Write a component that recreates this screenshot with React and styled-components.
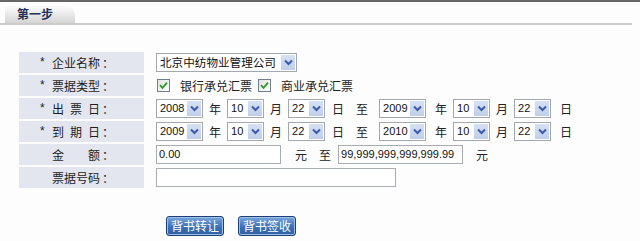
import React from "react";
import styled, { createGlobalStyle } from "styled-components";

const Global = createGlobalStyle`
  html, body { margin: 0; padding: 0; background: #fdfdfd; }
  body { font-family: "Noto Sans CJK SC", "Liberation Sans", sans-serif; font-size: 12px; color: #222; }
`;

const Page = styled.div`
  width: 640px;
  height: 241px;
  overflow: hidden;
`;

const TopBar = styled.div`
  height: 2px;
  background: #676767;
`;

const TabStrip = styled.div`
  height: 20px;
  margin-right: 8px;
  padding-top: 1px;
  padding-left: 5px;
  border-bottom: 2px solid #cbcbcb;
  display: flex;
  align-items: flex-end;
`;

const Tab = styled.div`
  width: 58px;
  height: 19px;
  padding-left: 12px;
  background: linear-gradient(#ffffff, #f0f0f0 40%, #d4d4d4);
  border-top-right-radius: 12px;
  font-weight: bold;
  font-size: 12px;
  line-height: 19px;
  color: #22305a;
`;

const Form = styled.div`
  margin-top: 27px;
  padding-left: 19px;
  display: flex;
  flex-direction: column;
  gap: 2px;
`;

const Row = styled.div`
  display: grid;
  grid-template-columns: 125px 1fr;
  column-gap: 12px;
  height: 21px;
`;

const Label = styled.div`
  background: #e3e6ee;
  display: flex;
  align-items: center;
  padding-left: 21px;
  line-height: 21px;
  color: #1e1e1e;
`;

const Star = styled.span`
  width: 12px;
  font-family: "Liberation Sans", sans-serif;
  font-size: 12px;
`;

const Justified = styled.span`
  display: inline-block;
  width: 48px;
  text-align: justify;
  text-align-last: justify;
`;

const Colon = styled.span`
  margin-left: 2px;
`;

const Value = styled.div`
  display: flex;
  align-items: center;
`;

const SelectBox = styled.span`
  display: inline-flex;
  align-items: stretch;
  box-sizing: border-box;
  width: ${(p) => p.$w}px;
  height: 19px;
  border: 1px solid #a2a7b0;
  background: #fff;
  padding: 1px;
`;

const SelectText = styled.span`
  flex: 1;
  padding-left: 2px;
  line-height: 15px;
  font-family: ${(p) =>
    p.$num ? '"Liberation Sans", sans-serif' : '"Noto Sans CJK SC", sans-serif'};
  font-size: ${(p) => (p.$num ? "11px" : "11.6px")};
  color: #111;
  white-space: nowrap;
  overflow: hidden;
`;

const ArrowBtn = styled.span`
  width: 14px;
  background: linear-gradient(#d6e1f3, #bfcee9);
  display: flex;
  align-items: center;
  justify-content: center;
`;

const Unit = styled.span`
  margin: 0 ${(p) => p.$mr ?? 6}px 0 ${(p) => p.$ml ?? 6}px;
  line-height: 19px;
`;

const TextInput = styled.span`
  display: inline-block;
  box-sizing: border-box;
  width: ${(p) => p.$w}px;
  height: 19px;
  border: 1px solid #a8acb3;
  background: #fff;
  padding-left: 2px;
  font-family: "Liberation Sans", sans-serif;
  font-size: 11px;
  line-height: 17px;
  color: #111;
  white-space: nowrap;
  overflow: hidden;
`;

const CheckBox = styled.span`
  box-sizing: border-box;
  width: 13px;
  height: 13px;
  border: 1px solid #6f7f8f;
  background: linear-gradient(135deg, #e2e2dc, #ffffff);
  display: inline-flex;
  align-items: center;
  justify-content: center;
  margin-left: ${(p) => p.$ml ?? 0}px;
  margin-right: 10px;
`;

const CheckText = styled.span`
  line-height: 19px;
`;

const Buttons = styled.div`
  margin-top: 28px;
  padding-left: 166px;
  display: flex;
  gap: 14px;
`;

const Button = styled.span`
  box-sizing: border-box;
  width: 58px;
  height: 20px;
  border: 1px solid #1d3f75;
  border-radius: 3px;
  background: linear-gradient(#7aa6dc, #3d72b8 55%, #2d5d9e);
  box-shadow: inset 0 0 0 1px #9cc0ea;
  color: #fff;
  font-size: 12px;
  line-height: 18px;
  text-align: center;
`;

const Chevron = () => (
  <svg width="9" height="7" viewBox="0 0 9 7">
    <path d="M1 1.5 L4.5 5 L8 1.5" fill="none" stroke="#3b5bae" strokeWidth="2" />
  </svg>
);

const Check = () => (
  <svg width="9" height="9" viewBox="0 0 9 9">
    <path d="M1 4.2 L3.5 6.8 L8 1.6" fill="none" stroke="#2c9a2c" strokeWidth="1.8" />
  </svg>
);

const Select = ({ w, children, num }) => (
  <SelectBox $w={w}>
    <SelectText $num={num}>{children}</SelectText>
    <ArrowBtn>
      <Chevron />
    </ArrowBtn>
  </SelectBox>
);

const FieldLabel = ({ star, text }) => (
  <Label>
    <Star>{star ? "*" : ""}</Star>
    <Justified>{text}</Justified>
    <Colon>：</Colon>
  </Label>
);

const DateRange = ({ from, to }) => (
  <Value>
    <Select w={47} num>{from}</Select>
    <Unit>年</Unit>
    <Select w={37} num>10</Select>
    <Unit>月</Unit>
    <Select w={37} num>22</Select>
    <Unit $ml={7} $mr={12}>日</Unit>
    <Unit $ml={0} $mr={11}>至</Unit>
    <Select w={47} num>{to}</Select>
    <Unit $ml={9}>年</Unit>
    <Select w={37} num>10</Select>
    <Unit>月</Unit>
    <Select w={37} num>22</Select>
    <Unit $ml={9}>日</Unit>
  </Value>
);

export default function App() {
  return (
    <Page>
      <Global />
      <TopBar />
      <TabStrip>
        <Tab>第一步</Tab>
      </TabStrip>
      <Form>
        <Row>
          <FieldLabel star text="企业名称" />
          <Value>
            <Select w={141}>北京中纺物业管理公司</Select>
          </Value>
        </Row>
        <Row>
          <FieldLabel star text="票据类型" />
          <Value>
            <CheckBox $ml={1}>
              <Check />
            </CheckBox>
            <CheckText>银行承兑汇票</CheckText>
            <CheckBox $ml={6}>
              <Check />
            </CheckBox>
            <CheckText>商业承兑汇票</CheckText>
          </Value>
        </Row>
        <Row>
          <FieldLabel star text="出票日" />
          <DateRange from="2008" to="2009" />
        </Row>
        <Row>
          <FieldLabel star text="到期日" />
          <DateRange from="2009" to="2010" />
        </Row>
        <Row>
          <FieldLabel text="金额" />
          <Value>
            <TextInput $w={125}>0.00</TextInput>
            <Unit $ml={14} $mr={12}>元</Unit>
            <Unit $ml={0} $mr={7}>至</Unit>
            <TextInput $w={125}>99,999,999,999,999.99</TextInput>
            <Unit $ml={13}>元</Unit>
          </Value>
        </Row>
        <Row>
          <FieldLabel text="票据号码" />
          <Value>
            <TextInput $w={240} />
          </Value>
        </Row>
      </Form>
      <Buttons>
        <Button>背书转让</Button>
        <Button>背书签收</Button>
      </Buttons>
    </Page>
  );
}
